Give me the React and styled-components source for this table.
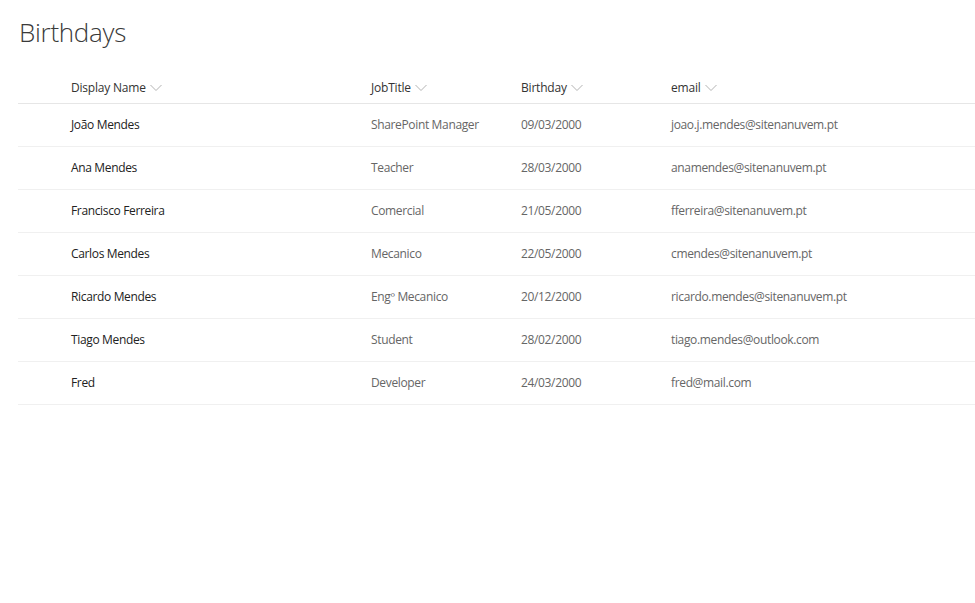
import React from "react";
import styled, { createGlobalStyle } from "styled-components";

const Global = createGlobalStyle`
  html, body { margin: 0; padding: 0; background: #fff; }
  body { font-family: "Open Sans", "Noto Sans", sans-serif; -webkit-font-smoothing: antialiased; }
`;

const Page = styled.div`
  padding: 12px 0 0 18px;
  overflow: hidden;
`;

const Title = styled.h1`
  margin: 0 0 0 1px;
  font-weight: 300;
  font-size: 26px;
  line-height: 40px;
  color: #3a3a3a;
  letter-spacing: -0.3px;
`;

const Table = styled.div`
  margin-top: 18px;
  width: 1000px;
`;

const Row = styled.div`
  display: grid;
  grid-template-columns: 53px 300px 150px 150px 1fr;
  align-items: center;
  height: ${(p) => (p.$header ? "33px" : "42px")};
  border-bottom: 1px solid ${(p) => (p.$header ? "#e6e6e6" : "#f0f0f0")};
`;

const HeadCell = styled.div`
  font-size: 12px;
  letter-spacing: -0.2px;
  color: #333;
  display: flex;
  align-items: center;
  gap: 4px;
  padding-top: 2px;
`;

const Cell = styled.div`
  font-size: 12px;
  letter-spacing: -0.35px;
  color: ${(p) => (p.$primary ? "#222" : "#666")};
  white-space: nowrap;
  padding-bottom: 2px;
`;

const Chevron = () => (
  <svg width="12" height="8" viewBox="0 0 12 8">
    <path d="M0.5 1 L6 6.5 L11.5 1" fill="none" stroke="#b3b3b3" strokeWidth="1" />
  </svg>
);

const data = [
  ["João Mendes", "SharePoint Manager", "09/03/2000", "joao.j.mendes@sitenanuvem.pt"],
  ["Ana Mendes", "Teacher", "28/03/2000", "anamendes@sitenanuvem.pt"],
  ["Francisco Ferreira", "Comercial", "21/05/2000", "fferreira@sitenanuvem.pt"],
  ["Carlos Mendes", "Mecanico", "22/05/2000", "cmendes@sitenanuvem.pt"],
  ["Ricardo Mendes", "Engº Mecanico", "20/12/2000", "ricardo.mendes@sitenanuvem.pt"],
  ["Tiago Mendes", "Student", "28/02/2000", "tiago.mendes@outlook.com"],
  ["Fred", "Developer", "24/03/2000", "fred@mail.com"],
];

export default function App() {
  return (
    <Page>
      <Global />
      <Title>Birthdays</Title>
      <Table>
        <Row $header>
          <span />
          {["Display Name", "JobTitle", "Birthday", "email"].map((h) => (
            <HeadCell key={h}>
              {h}
              <Chevron />
            </HeadCell>
          ))}
        </Row>
        {data.map((r) => (
          <Row key={r[0]}>
            <span />
            <Cell $primary>{r[0]}</Cell>
            <Cell>{r[1]}</Cell>
            <Cell>{r[2]}</Cell>
            <Cell>{r[3]}</Cell>
          </Row>
        ))}
      </Table>
    </Page>
  );
}
